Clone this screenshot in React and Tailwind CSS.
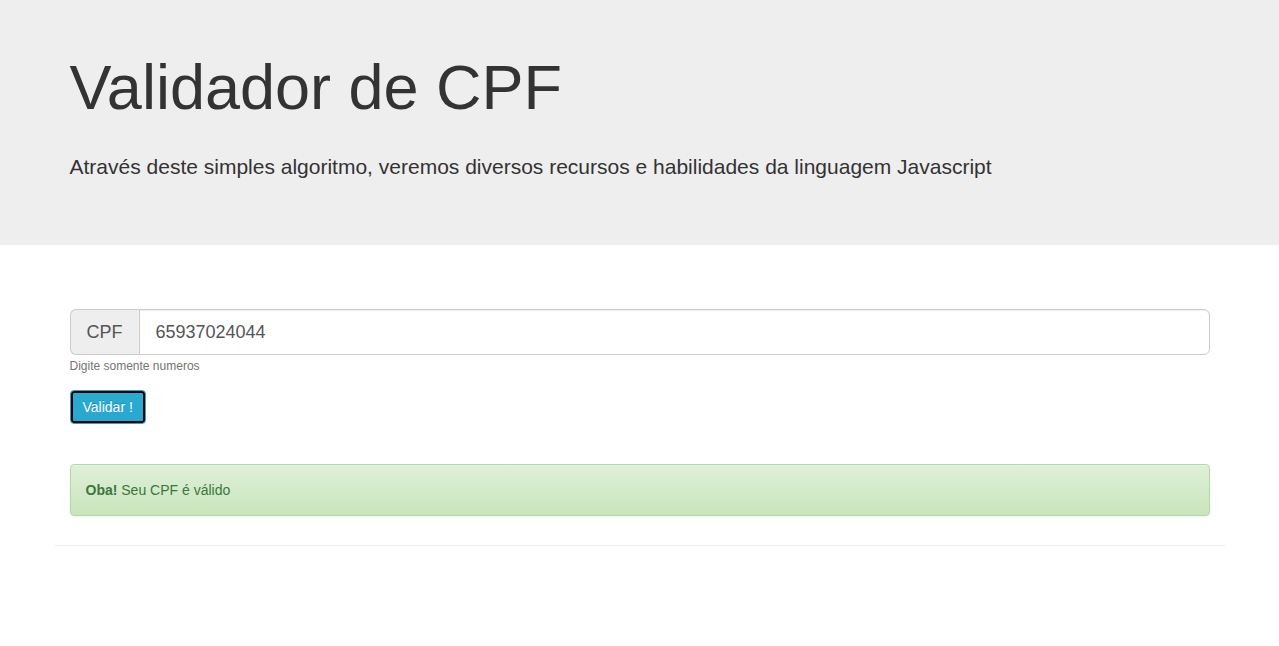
/**
 * Validador de CPF
 */

const font = { fontFamily: '"Liberation Sans", Arial, Helvetica, sans-serif' };

export default function App() {
    return (
        <div className="min-h-[646px] bg-white text-[#333] text-[14px] leading-[20px]" style={font}>
            {/* Jumbotron */}
            <div className="bg-[#eee] pt-[53px] pb-[63px]">
                <div className="mx-auto w-[1170px] px-[15px]">
                    <h1 className="text-[63px] leading-[1.1] font-normal">Validador de CPF</h1>
                    <p className="mt-[30px] text-[21px] leading-[30px] font-light">
                        Através deste simples algoritmo, veremos diversos recursos e habilidades da linguagem Javascript
                    </p>
                </div>
            </div>

            <div className="mx-auto w-[1170px]">
                <div className="px-[15px] pt-[64px]">
                    {/* Input group */}
                    <div className="flex h-[46px] text-[18px] text-[#555]">
                        <span className="flex items-center w-[69px] px-[16px] bg-[#eee] border border-r-0 border-[#ccc] rounded-l-[6px]">
                            CPF
                        </span>
                        <div className="flex-1 flex items-center px-[16px] border border-[#ccc] rounded-r-[6px] shadow-[inset_0_1px_1px_rgba(0,0,0,0.075)]">
                            65937024044
                        </div>
                    </div>
                    <small className="block mt-[3px] text-[12px] leading-[17px] text-[#737373]">Digite somente numeros</small>

                    {/* Botão */}
                    <button className="mt-[15px] h-[34px] px-[12px] rounded-[4px] border border-[#28a4c9] bg-gradient-to-b from-[#2aabd2] to-[#28a8d0] text-white text-[14px] leading-[20px] shadow-[inset_0_0_0_2px_#000] [text-shadow:0_-1px_0_rgba(0,0,0,0.2)]">
                        Validar !
                    </button>

                    {/* Alerta */}
                    <div className="mt-[40px] p-[15px] rounded-[4px] border border-[#b2dba1] bg-gradient-to-b from-[#dff0d8] to-[#c8e5bc] text-[#3c763d] shadow-[inset_0_1px_0_rgba(255,255,255,0.25),0_1px_2px_rgba(0,0,0,0.05)]">
                        <strong>Oba!</strong> Seu CPF é válido
                    </div>
                </div>
                <hr className="mt-[29px] border-0 border-t border-[#eee]" />
            </div>
        </div>
    );
}
